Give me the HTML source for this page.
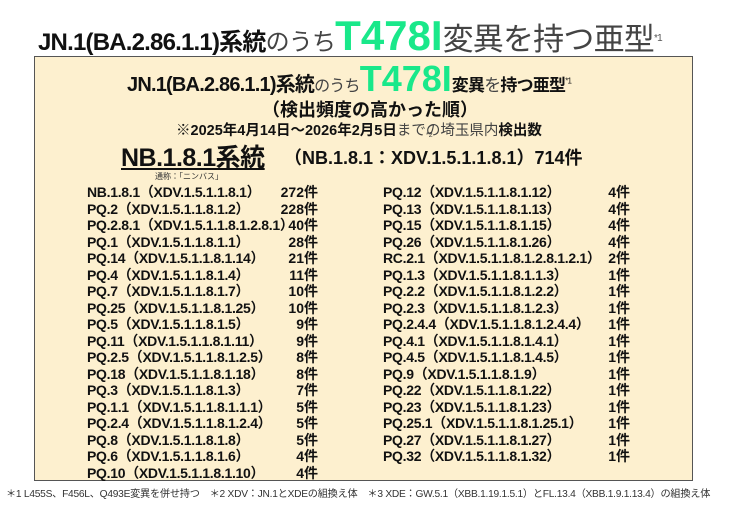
<!DOCTYPE html>
<html><head><meta charset="utf-8"><style>
body{margin:0;width:740px;height:505px;background:#fff;position:relative;overflow:hidden;font-family:"Liberation Sans","Noto Sans CJK JP",sans-serif;color:#111}
.a{position:absolute;white-space:nowrap}
.g{color:#19e88a}
.box{position:absolute;left:34px;top:56px;width:657px;height:423px;background:#fdf0cf;border:1px solid #555}
.r{position:absolute;font-weight:bold;font-size:14px;white-space:nowrap;line-height:16.5px;letter-spacing:-0.3px}
.c{position:absolute;font-weight:bold;font-size:14px;line-height:16.5px;text-align:right;width:60px}
</style></head><body>
<div class="a" style="left:38px;top:12px;font-size:24px;font-weight:bold;letter-spacing:-0.8px">JN.1(BA.2.86.1.1)系統<span style="font-weight:normal;color:#444">のうち</span><span class="g" style="font-size:42px;letter-spacing:0">T478I</span><span style="font-weight:normal;color:#444;font-size:31px">変異を持つ亜型</span><sup style="font-size:10px;color:#555;font-weight:normal">*1</sup></div>
<div class="box"></div>
<div class="a" style="left:127px;top:58px;font-size:20px;font-weight:bold;letter-spacing:-0.8px">JN.1(BA.2.86.1.1)系統<span style="font-weight:normal;font-size:16px;color:#444">のうち</span><span class="g" style="font-size:36px;letter-spacing:0">T478I</span><span style="font-size:17px">変異<span style="font-weight:normal;color:#444">を</span>持つ亜型</span><sup style="font-size:8px;font-weight:normal">*1</sup></div>
<div class="a" style="left:262px;top:96px;font-size:18px;font-weight:bold">（検出頻度の高かった順）</div>
<div class="a" style="left:176px;top:119px;font-size:14.5px;font-weight:bold">※2025年4月14日～2026年2月5日<span style="font-weight:normal;color:#444">までの埼玉県内</span>検出数</div>
<div class="a" style="left:121px;top:138px;font-size:25px;font-weight:bold;text-decoration:underline;letter-spacing:-0.5px">NB.1.8.1系統</div>
<div class="a" style="left:284px;top:144px;font-size:18px;font-weight:bold">（NB.1.8.1：XDV.1.5.1.1.8.1）714件</div>
<div class="a" style="left:426px;top:132px;font-size:7px;color:#444">*2</div>
<div class="a" style="left:155px;top:171px;font-size:8px;color:#333">通称：「ニンバス」</div>

<div class="r" style="left:87px;top:184px">NB.1.8.1（XDV.1.5.1.1.8.1）<br>PQ.2（XDV.1.5.1.1.8.1.2）<br>PQ.2.8.1（XDV.1.5.1.1.8.1.2.8.1）<br>PQ.1（XDV.1.5.1.1.8.1.1）<br>PQ.14（XDV.1.5.1.1.8.1.14）<br>PQ.4（XDV.1.5.1.1.8.1.4）<br>PQ.7（XDV.1.5.1.1.8.1.7）<br>PQ.25（XDV.1.5.1.1.8.1.25）<br>PQ.5（XDV.1.5.1.1.8.1.5）<br>PQ.11（XDV.1.5.1.1.8.1.11）<br>PQ.2.5（XDV.1.5.1.1.8.1.2.5）<br>PQ.18（XDV.1.5.1.1.8.1.18）<br>PQ.3（XDV.1.5.1.1.8.1.3）<br>PQ.1.1（XDV.1.5.1.1.8.1.1.1）<br>PQ.2.4（XDV.1.5.1.1.8.1.2.4）<br>PQ.8（XDV.1.5.1.1.8.1.8）<br>PQ.6（XDV.1.5.1.1.8.1.6）<br>PQ.10（XDV.1.5.1.1.8.1.10）</div>
<div class="c" style="left:258px;top:184px">272件<br>228件<br>40件<br>28件<br>21件<br>11件<br>10件<br>10件<br>9件<br>9件<br>8件<br>8件<br>7件<br>5件<br>5件<br>5件<br>4件<br>4件</div>
<div class="r" style="left:383px;top:184px">PQ.12（XDV.1.5.1.1.8.1.12）<br>PQ.13（XDV.1.5.1.1.8.1.13）<br>PQ.15（XDV.1.5.1.1.8.1.15）<br>PQ.26（XDV.1.5.1.1.8.1.26）<br>RC.2.1（XDV.1.5.1.1.8.1.2.8.1.2.1）<br>PQ.1.3（XDV.1.5.1.1.8.1.1.3）<br>PQ.2.2（XDV.1.5.1.1.8.1.2.2）<br>PQ.2.3（XDV.1.5.1.1.8.1.2.3）<br>PQ.2.4.4（XDV.1.5.1.1.8.1.2.4.4）<br>PQ.4.1（XDV.1.5.1.1.8.1.4.1）<br>PQ.4.5（XDV.1.5.1.1.8.1.4.5）<br>PQ.9（XDV.1.5.1.1.8.1.9）<br>PQ.22（XDV.1.5.1.1.8.1.22）<br>PQ.23（XDV.1.5.1.1.8.1.23）<br>PQ.25.1（XDV.1.5.1.1.8.1.25.1）<br>PQ.27（XDV.1.5.1.1.8.1.27）<br>PQ.32（XDV.1.5.1.1.8.1.32）</div>
<div class="c" style="left:570px;top:184px">4件<br>4件<br>4件<br>4件<br>2件<br>1件<br>1件<br>1件<br>1件<br>1件<br>1件<br>1件<br>1件<br>1件<br>1件<br>1件<br>1件</div>
<div class="a" style="left:6px;top:485px;font-size:10.2px;color:#333;letter-spacing:-0.25px">＊1 L455S、F456L、Q493E変異を併せ持つ　＊2 XDV：JN.1とXDEの組換え体　＊3 XDE：GW.5.1（XBB.1.19.1.5.1）とFL.13.4（XBB.1.9.1.13.4）の組換え体</div>
</body></html>
